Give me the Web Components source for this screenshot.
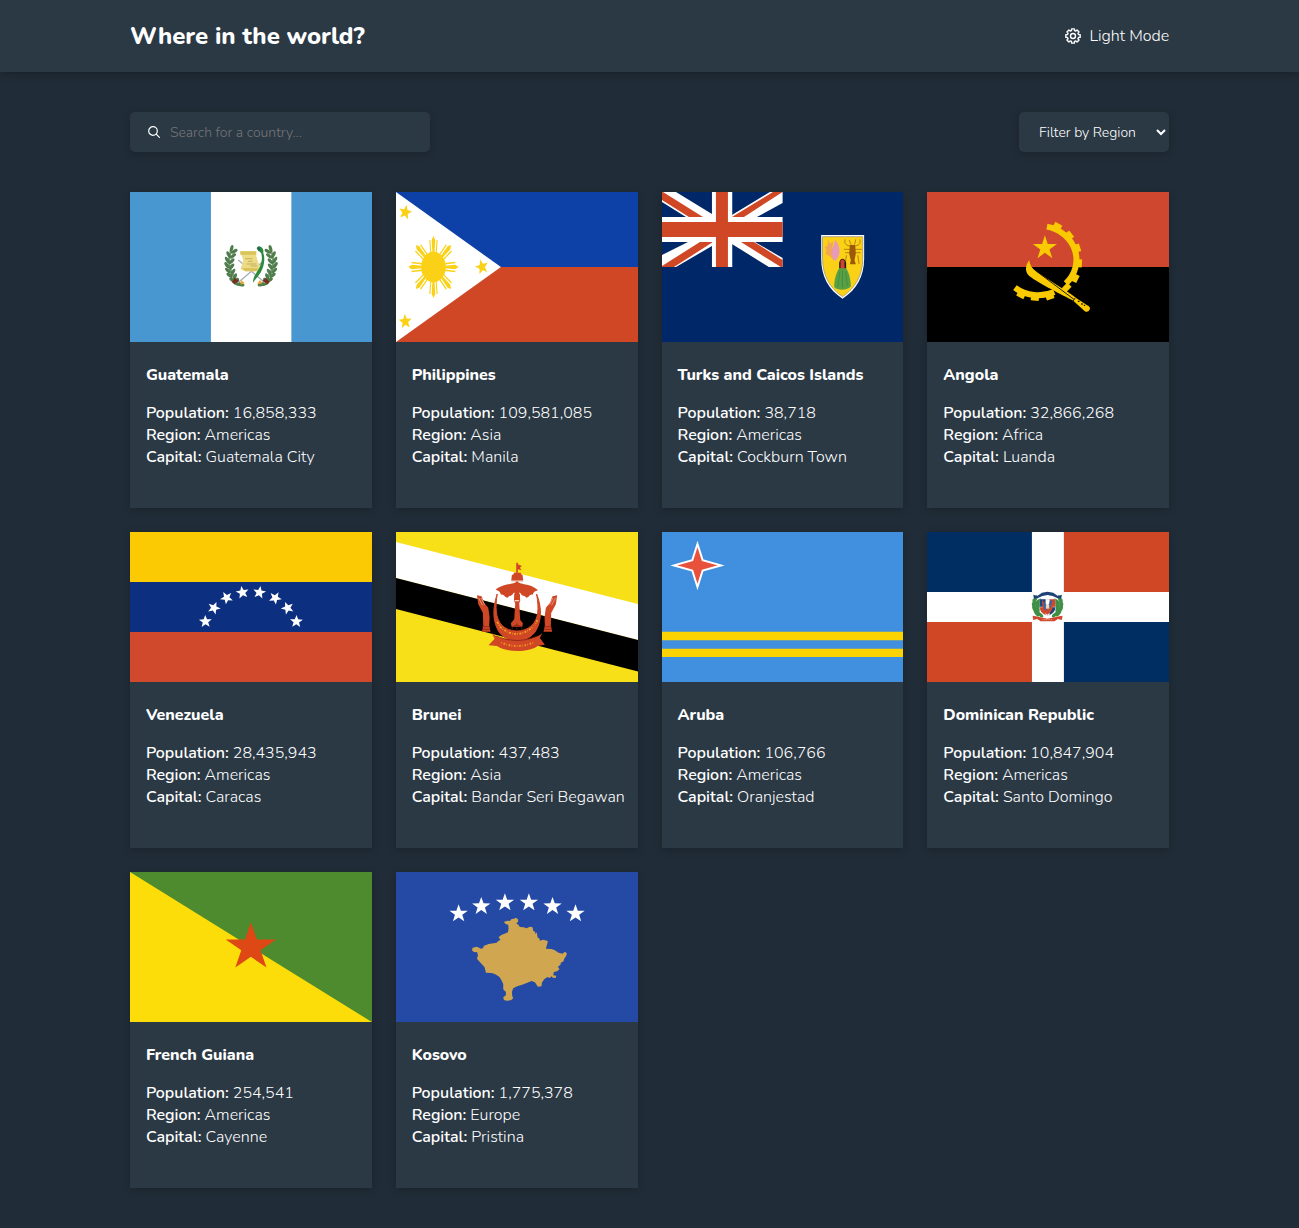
<!DOCTYPE html>
<html lang="en">
<head>
<meta charset="utf-8">
<meta name="viewport" content="width=device-width, initial-scale=1">
<title>Where in the world?</title>
<style>
  :root {
    --bg: #202c37;
    --surface: #2b3945;
    --text: #ffffff;
    --gutter: 10%;
  }
  * { box-sizing: border-box; }
  body {
    margin: 0;
    min-height: 100vh;
    background: var(--bg);
    color: var(--text);
    font: 300 16px/22px Nunito, Lato, "Open Sans", sans-serif;
  }
</style>
</head>
<body>
<world-app>
  <app-header slot="header">
    Where in the world?
    <theme-toggle slot="action">Light Mode</theme-toggle>
  </app-header>
  <search-box slot="tools" placeholder="Search for a country..."></search-box>
  <region-filter slot="tools"></region-filter>

  <country-card flag="gt" population="16,858,333" region="Americas" capital="Guatemala City">Guatemala</country-card>
  <country-card flag="ph" population="109,581,085" region="Asia" capital="Manila">Philippines</country-card>
  <country-card flag="tc" population="38,718" region="Americas" capital="Cockburn Town">Turks and Caicos Islands</country-card>
  <country-card flag="ao" population="32,866,268" region="Africa" capital="Luanda">Angola</country-card>
  <country-card flag="ve" population="28,435,943" region="Americas" capital="Caracas">Venezuela</country-card>
  <country-card flag="bn" population="437,483" region="Asia" capital="Bandar Seri Begawan">Brunei</country-card>
  <country-card flag="aw" population="106,766" region="Americas" capital="Oranjestad">Aruba</country-card>
  <country-card flag="do" population="10,847,904" region="Americas" capital="Santo Domingo">Dominican Republic</country-card>
  <country-card flag="gf" population="254,541" region="Americas" capital="Cayenne">French Guiana</country-card>
  <country-card flag="xk" population="1,775,378" region="Europe" capital="Pristina">Kosovo</country-card>
</world-app>

<script>
/* ---------- drawing helpers ---------- */
const polar = (cx, cy, rx, ry, deg) => {
  const a = deg * Math.PI / 180;
  return (cx + rx * Math.sin(a)).toFixed(2) + ',' + (cy - ry * Math.cos(a)).toFixed(2);
};
const star = (cx, cy, r, fill, rot = 0, rx = r, inner = 0.382) => {
  const p = [];
  for (let i = 0; i < 10; i++) {
    const k = i % 2 ? inner : 1;
    p.push(polar(cx, cy, rx * k, r * k, rot + i * 36));
  }
  return `<polygon points="${p.join(' ')}" fill="${fill}"/>`;
};
const wreath = (pts, fill) => pts.map(([x, y, a]) =>
  `<ellipse cx="${x}" cy="${y}" rx="5" ry="11" fill="${fill}" transform="rotate(${a} ${x} ${y})"/>`).join('');

/* ---------- flags, each on a 242 x 150 field ---------- */
const flags = {
  gt() {
    const left = [[65,56,15],[73,64,60],[56,74,-25],[69,78,55],[52,90,-30],[65,94,45],[51,106,-35],[65,110,40],[54,122,-45],[69,126,30],[59,136,-55],[75,140,20],[68,150,-60],[82,154,10],[81,161,-70],[93,164,-80]];
    const right = left.map(([x, y, a]) => [247 - x, y, -a]);
    return `<rect width="244" height="150" fill="#4997d0"/><rect x="81" width="80.500" height="150" fill="#fff"/>
    <g transform="translate(80 38) scale(.3333)">
      <path d="M64 60Q42 120 92 162M183 60Q205 120 155 162" fill="none" stroke="#7b9a72" stroke-width="6"/>
      ${wreath(left, '#4f7d4c')}${wreath(right, '#4f7d4c')}
      <path d="M85 90L165 158M162 92L84 158" stroke="#a9adb8" stroke-width="4"/>
      <path d="M75 144l-10 12 8 6 14-10zM168 144l12 12-8 6-14-10z" fill="#7d2d20"/>
      <path d="M94 150l10 10-12 4zM150 150l8 10-16 3z" fill="#f0a325"/>
      <path d="M91 64H139V78L150 112 144 124H106L92 118 100 90z" fill="#ecdc86"/>
      <path d="M91 64h48v10H91zM96 114h48l-4 10h-34z" fill="#d9c35a"/>
      <path d="M106 86h22M114 94h14M110 102h30M122 108h20" stroke="#b09a4a" stroke-width="2"/>
      <path d="M143 50C155 46 163 58 160 68 166 84 164 108 152 128 144 140 136 148 129 158 130 140 140 128 148 114 156 98 158 84 154 70L144 60z" fill="#2c8a3c"/>
      <path d="M140 54L148 49 152 60 146 64z" fill="#1f6d46"/>
    </g>`;
  },
  ph() {
    let rays = '';
    for (let i = 0; i < 8; i++)
      rays += `<g transform="rotate(${i * 45})"><path d="M-1.300 -14L-2.200 -27 0 -31 2.200 -27 1.300 -14z"/><path d="M-3.300 -14L-4.500 -27M3.300 -14L4.500 -27" stroke="#fad116" stroke-width="1.400"/></g>`;
    return `<rect width="244" height="75" fill="#0d41a8"/><rect y="75" width="244" height="75" fill="#d04726"/>
    <path d="M0 0L105 75 0 150z" fill="#fff"/>
    <g fill="#fad116" transform="translate(37.500 75) scale(.81 1)">${rays}<circle r="15.300"/></g>
    ${star(9.3, 20.3, 7.8, '#fad116', 12, 6.8, .43)}${star(86, 75, 7.8, '#fad116', -15, 6.8, .43)}${star(9.3, 129.5, 7.8, '#fad116', -5, 6.8, .43)}`;
  },
  tc() {
    return `<rect width="244" height="150" fill="#002868"/>
    <path d="M0 0H14L50 22V25H24L0 10zM108 0H120.700V11L95 25H70V23zM0 63L26 50H50V54L14 75H0zM70 50H93L120.700 66V75H107L70 52z" fill="#fff"/>
    <path d="M0 0V8L27 25H41L1 0zM111 0H120.700L82 25H70zM0 75H12L51 50H38L0 74zM120.700 75V68L92 50H79L119 75z" fill="#d04726"/>
    <path d="M50 0H70.300V25H120.700V50H70.300V75H50V50H0V25H50z" fill="#fff"/>
    <path d="M54 0H66V30H120.700V45H66V75H54V45H0V30H54z" fill="#d04726"/>
    <g transform="translate(-2 -2) scale(.3333)">
      <path d="M484 135H613V205C613 260 590 300 548 326 506 300 484 260 484 205z" fill="#fff"/>
      <path d="M488 140H609V205C609 256 586 295 548 320 510 295 488 256 488 205z" fill="#fad116" stroke="#8b8a80" stroke-width="2"/>
      <path d="M505 149l6 12 9-8-2 18 8 20-3 20-14-13-12-6 3-12-6-10 9-2z" fill="#f2a65a"/>
      <path d="M526 150c8 8 14 24 13 36-1 14-7 22-15 27-8-12-10-24-6-36z" fill="#e79bb6"/>
      <path d="M556 148c-4 14 4 20 18 20M600 148c4 14-4 20-18 20M552 178h54M556 188h46M560 196l-4 24M594 196l4 26M568 150l6 14M588 148l-4 16" stroke="#ad7410" stroke-width="2.500" fill="none"/>
      <path d="M570 165h16l2 26-4 20 4 12h-18l3-12-5-20z" fill="#9c5a08"/>
      <path d="M538 236V218q3-12 10-12t11 12v18z" fill="#201a14"/><path d="M542 236V214q6-12 12 0v22z" fill="#d0432c"/>
      <path d="M538 235h21c8 12 14 34 14 54-8 13-42 13-50 2 0-22 6-42 15-56z" fill="#58a046"/>
      <path d="M548 240v52M540 244l-6 46M557 244l6 44" stroke="#3d8738" stroke-width="2"/>
    </g>`;
  },
  ao() {
    const teeth = [[203,48],[239,76],[263,114],[268,160],[257,205],[231,233],[180,260],[135,264],[93,255]]
      .map(([x, y]) => {
        const a = Math.atan2(y - 150, x - 145) * 180 / Math.PI;
        return `<path d="M-10 -12H8V12H-10z" transform="translate(${x} ${y}) rotate(${a.toFixed(1)})"/>`;
      }).join('');
    return `<rect width="244" height="75" fill="#d04730"/><rect y="75" width="244" height="75"/>
    <g transform="translate(63 18) scale(.3333)">
      <path d="M171 50A110 101 0 0 1 228 220M75 233A112 102 0 0 0 193 246" fill="none" stroke="#f9ca02" stroke-width="18"/>
      <g fill="#f9ca02">${teeth}
      <path d="M118 151C106 166 104 186 118 198 150 222 220 256 250 272L284 303Q294 310 300 298 302 290 292 286L262 266C220 236 170 206 138 184 126 176 120 166 118 151z"/></g>
      <path d="M140 184L252 268M256 264l-8 12" stroke="#211c00" stroke-width="3" fill="none"/>
      <path d="M264 274h5M274 282h5M282 286h4" stroke="#211c00" stroke-width="4"/>
      ${star(165, 114, 38, '#f9ca02')}
    </g>`;
  },
  ve() {
    const s = [[75.5,89.5,-2],[84,76,22],[96.7,65.8,-30],[112.5,60.5,-10],[129.5,60.5,10],[145.3,66,30],[157.7,76,-22],[166.5,89.5,2]];
    return `<rect width="244" height="50" fill="#fbca02"/><rect y="50" width="244" height="50" fill="#0c2f80"/><rect y="100" width="244" height="50" fill="#d1492c"/>
    ${s.map(([x, y, r]) => star(x, y, 6.6, '#fff', r, 6.8, .42)).join('')}`;
  },
  bn() {
    const hand = `<path d="M243 196L257 199 265 219 277 233 281 261 280 287 284 305H258L262 287 261 249 247 223z"/><path d="M248 204l12 22M256 204l10 20" stroke="#f3b7a0" stroke-width="2"/><path d="M258 290h24M258 298h24" stroke="#7c1c10" stroke-width="2"/>`;
    return `<rect width="244" height="150" fill="#f7e017"/>
    <path d="M0 10L242 72 244 108.500 0 46z" fill="#fff"/><path d="M0 46L244 108.500V140L0 77z"/>
    <g transform="translate(0 -2) scale(.3333)" fill="#d04726">
      ${hand}<g transform="matrix(-1 0 0 1 727 0)">${hand}</g>
      <path d="M361 98H366V103L378 108 372 113 377 121 366 118V128H374L377 134H380L382 152H346L348 134H352L354 128H361z"/>
      <path d="M346 152h36v4h-36z" fill="#f4d3c8"/>
      <path d="M363 153C354 166 326 158 300 178 304 184 312 181 315 194 324 190 327 203 335 203 341 194 346 202 352 190L363 182 374 190C380 202 385 194 391 203 399 203 402 190 411 194 414 181 422 184 426 180 400 158 372 166 363 153z"/>
      <path d="M354 180h18l-2 12h2l1 20-3 8 3 50 8 10-2 10h-32l-2-10 10-12 3-48-4-8 1-20h1z"/>
      <path d="M356 212h14" stroke="#fbd9cb" stroke-width="4"/>
      <path d="M304 192C292 226 288 268 307 302 330 342 396 342 420 302 440 268 436 224 422 192 430 236 428 266 408 286 384 310 340 308 318 286 298 264 298 230 304 192z" stroke="#d04726" stroke-width="3"/>
      <path d="M287 308C310 336 418 336 440 308L432 324 447 344 425 348C400 368 330 368 303 348L278 346 296 326z"/>
      <path d="M312 290q50 44 100 0M304 276q4 8 10 14M424 270l-6 16" fill="none" stroke="#f0a51c" stroke-width="5" stroke-dasharray="6 4 2 4"/>
      <path d="M316 338q48 20 96 0" fill="none" stroke="#f0931c" stroke-width="6" stroke-dasharray="2 5 5 4"/>
      <path d="M300 318q64 28 126 0" fill="none" stroke="#7c1c10" stroke-width="2"/>
      <path d="M347 302q4-20 16-16 14-2 16 16M363 280v20" fill="none" stroke="#7c1c10" stroke-width="2"/>
    </g>`;
  },
  aw() {
    return `<rect width="244" height="150" fill="#4190df"/><path d="M0 99.700H244V108.300H0zM0 116.700H244V125H0z" fill="#fbd202"/>
    <path d="M35.500 12L40.700 28.300 59 33.400 40.700 38.500 35.500 55 30.300 38.500 12 33.400 30.300 28.300z" fill="#e8513c" stroke="#fff" stroke-width="2"/>`;
  },
  do() {
    const left = [[77,86,20],[86,94,50],[73,97,-10],[84,104,40],[72,108,-20],[83,114,30],[74,118,-30],[84,124,10],[80,130,-40],[91,134,-50]];
    const right = left.map(([x, y, a]) => [226 - x, y, -a]);
    return `<rect width="242" height="60" fill="#002d62"/><path d="M137 90H244V150H137z" fill="#002d62"/><path d="M137 0H244V60H137zM0 90H105V150H0z" fill="#d04726"/>
    <path d="M105 0H137V60H244V90H137V150H105V90H0V60H105z" fill="#fff"/>
    <g transform="translate(83 38) scale(.3333)">
      ${wreath(left, '#3f8f45')}${wreath(right, '#3f8f45')}
      <path d="M70 74l12 4 14-10 17-3 17 3 14 10 12-4-2 12-12-2-14-6-15-3-15 3-14 6-12 2z" fill="#1d4277"/>
      <path d="M90 88h46v22q0 20-23 27-23-7-23-27z" fill="#fff" stroke="#9aa3b5"/>
      <path d="M90 88h17v22H90zM119 112h17q0 16-17 23z" fill="#20447e"/><path d="M119 88h17v22h-17zM90 112h17v23q-17-7-17-23z" fill="#d2482c"/>
      <path d="M96 90l16 18 16-18v24q-4 14-16 20-10-6-14-20z" fill="#d2482c"/><path d="M100 94l10 10v20l-8-8zM120 92l8-2-6 22-8 6z" fill="#3a66a3"/>
      <path d="M108 104h10v12h-10z" fill="#f3d9b0"/>
      <path d="M68 137l10 2 14 3 20 4 22-4 14-3 10-2-2 13-12-3-10 7H92l-10-7-12 3z" fill="#d2482c"/>
      <path d="M98 149h30" stroke="#eaa08c" stroke-width="3" stroke-dasharray="3 2"/>
    </g>`;
  },
  gf() {
    return `<rect width="244" height="150" fill="#4e8b2f"/><path d="M0 0L242 150H0z" fill="#fcdd09"/>${star(121, 75.3, 25, '#dd4814', 0, 26.5)}`;
  },
  xk() {
    const s = [[86,100],[154,78],[225,67],[297,67],[368,78],[437,100]];
    return `<rect width="244" height="150" fill="#244aa5"/>
    <g transform="translate(34 8) scale(.3333)">
      ${s.map(([x, y]) => star(x, y + 1, 28, '#fff', 0, 29, .4)).join('')}
      <path d="M222 126L232 122 240 123 245 117 253 116 257 113 264 117 265 125 259 130 266 135 270 141 281 142 290 145 300 140 308 142 310 152 316 156 317 163 321 157 323 172 329 176 330 182 340 179 354 183 352 192 348 206 364 207 374 210 386 218 398 221 405 215 411 220 409 228 403 236 401 244 393 248 392 254 384 260 389 267 382 274 372 276 370 286 379 287 378 293 370 294 365 289 359 294 353 291 343 298 336 308 335 319 324 320 315 307 305 303 292 308 277 314 262 319 250 325 246 336 247 348 250 355 243 361 231 362 222 360 220 352 228 346 228 336 220 328 220 312 213 298 208 290 196 283 185 279 168 278 164 262 156 253 147 243 141 236 144 227 142 217 132 216 126 211 128 203 141 200 153 206 160 204 161 198 176 192 191 190 200 188 206 182 212 180 206 172 214 165 224 161 234 157 236 146 235 134 227 132z" fill="#d0a650"/>
    </g>`;
  },
};

/* ---------- components ---------- */
const define = (name, html, setup) => customElements.define(name, class extends HTMLElement {
  constructor() {
    super();
    const t = document.createElement('template');
    t.innerHTML = `<style>*{box-sizing:border-box}</style>` + html;
    this.attachShadow({ mode: 'open' }).append(document.importNode(t.content, true));
  }
  connectedCallback() { if (setup) setup.call(this, this.shadowRoot); }
});

customElements.define('country-flag', class extends HTMLElement {
  static observedAttributes = ['code'];
  constructor() {
    super();
    this.attachShadow({ mode: 'open' }).innerHTML = `
      <style>:host{display:block;height:150px} svg{display:block;width:100%;height:100%}</style>
      <svg viewBox="0 0 242 150" preserveAspectRatio="none" aria-hidden="true"></svg>`;
  }
  attributeChangedCallback(name, old, code) {
    this.shadowRoot.querySelector('svg').innerHTML = flags[code] ? flags[code]() : '';
  }
});

define('country-card', `
  <style>
    :host{display:block;min-width:0;background:var(--surface);box-shadow:0 2px 8px rgba(0,0,0,.2)}
    .body{display:flex;flex-direction:column;gap:16px;padding:22px 0 40px 16px}
    h2{margin:0;font-size:16px;line-height:22px;font-weight:800}
    dl{margin:0}
    dl div{display:flex;gap:4px;white-space:nowrap}
    dt{font-weight:600} dd{margin:0}
  </style>
  <country-flag></country-flag>
  <div class="body">
    <h2><slot></slot></h2>
    <dl>
      <div><dt>Population:</dt><dd data-key="population"></dd></div>
      <div><dt>Region:</dt><dd data-key="region"></dd></div>
      <div><dt>Capital:</dt><dd data-key="capital"></dd></div>
    </dl>
  </div>`,
  function (root) {
    root.querySelector('country-flag').setAttribute('code', this.getAttribute('flag'));
    root.querySelectorAll('dd').forEach(d => d.textContent = this.getAttribute(d.dataset.key));
  });

define('theme-toggle', `
  <style>
    :host{display:block}
    button{display:flex;align-items:center;gap:8px;margin:0;padding:0;border:0;background:none;color:inherit;font:inherit;cursor:pointer}
    svg{width:16px;height:16px}
  </style>
  <button type="button"><svg viewBox="0 0 16 16" fill="none" stroke="currentColor" stroke-width="1.400" stroke-linejoin="round" aria-hidden="true"><path class="cog"/><circle cx="8" cy="8" r="2.500"/></svg><slot></slot></button>`,
  function (root) {
    const pts = [];
    for (let i = 0; i < 8; i++)
      for (const [a, r] of [[-11, 7.3], [11, 7.3], [15, 5.7], [30, 5.7]])
        pts.push(polar(8, 8, r, r, i * 45 + a));
    root.querySelector('.cog').setAttribute('d', 'M' + pts.join('L') + 'z');
  });

define('app-header', `
  <style>
    :host{display:block;background:var(--surface);box-shadow:0 2px 8px rgba(0,0,0,.25)}
    header{display:flex;align-items:center;justify-content:space-between;padding:20px var(--gutter)}
    h1{margin:0;font-size:24px;line-height:32px;font-weight:800}
  </style>
  <header><h1><slot></slot></h1><slot name="action"></slot></header>`);

define('search-box', `
  <style>
    :host{display:block;width:300px;max-width:100%}
    label{display:flex;align-items:center;gap:10px;height:40px;padding:0 18px;border-radius:5px;background:var(--surface);box-shadow:0 2px 8px rgba(0,0,0,.2)}
    svg{flex:none;width:12px;height:12px}
    input{flex:1;min-width:0;height:40px;margin:0;padding:0;border:0;outline:0;background:none;color:inherit;font:inherit;font-size:14px;line-height:normal}
    input::placeholder{color:#757575}
  </style>
  <label><svg viewBox="0 0 12 12" fill="none" stroke="currentColor" stroke-width="1.200" stroke-linecap="round" aria-hidden="true"><circle cx="5" cy="5" r="4.300"/><path d="M8.200 8.200L11.400 11.400"/></svg><input type="text" aria-label="Search for a country"></label>`,
  function (root) { root.querySelector('input').placeholder = this.getAttribute('placeholder'); });

define('region-filter', `
  <style>
    :host{display:block}
    select{display:block;width:150px;height:40px;margin:0;padding:0 0 0 16px;border:0;border-radius:5px;background:var(--surface);color:inherit;font:inherit;font-size:14px;box-shadow:0 2px 8px rgba(0,0,0,.2)}
  </style>
  <select aria-label="Filter by Region">
    <option>Filter by Region</option><option>Africa</option><option>Americas</option><option>Asia</option><option>Europe</option><option>Oceania</option>
  </select>`);

define('world-app', `
  <style>
    :host{display:block}
    main{display:flex;flex-direction:column;gap:40px;padding:40px var(--gutter)}
    .tools{display:flex;flex-wrap:wrap;gap:24px;justify-content:space-between}
    .grid{display:grid;grid-template-columns:repeat(auto-fill,minmax(220px,1fr));gap:24px}
  </style>
  <slot name="header"></slot>
  <main><div class="tools"><slot name="tools"></slot></div><div class="grid"><slot></slot></div></main>`);
</script>
</body>
</html>
